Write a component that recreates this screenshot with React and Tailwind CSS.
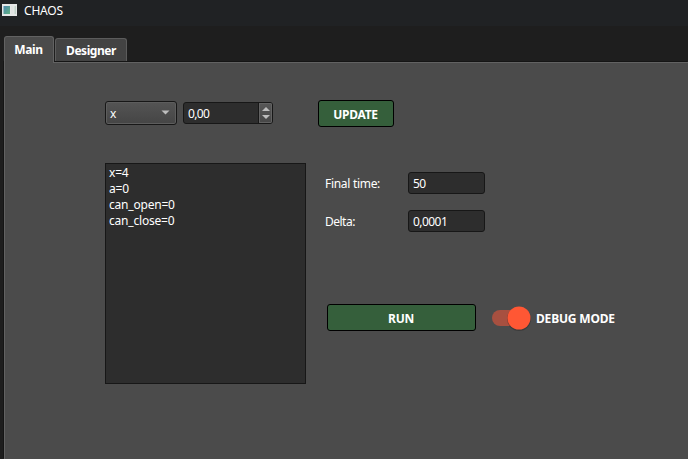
import React from "react";

const field =
  "flex h-[22px] w-[77px] items-center rounded-[3px] border border-[#171717] bg-[#2d2d2d] pl-1 pt-[2px] tracking-[-0.55px]";
const button =
  "flex h-[27px] items-center justify-center rounded-[3px] border border-black bg-[#355f3b] pr-px pt-[2px] font-bold";

function TitleBar() {
  return (
    <header className="flex h-[26px] items-start bg-[#202224] pl-[2px] pt-1">
      <svg width="15" height="12" viewBox="0 0 15 12" className="shrink-0">
        <defs>
          <linearGradient id="pane" x1="0" y1="0" x2="1" y2="1">
            <stop offset="0" stopColor="#4a86ad" />
            <stop offset="1" stopColor="#63b383" />
          </linearGradient>
        </defs>
        <rect width="15" height="12" fill="#e6e8e8" />
        <rect x="1.5" y="2" width="6.5" height="8" fill="url(#pane)" />
        <rect x="9" y="2" width="2.5" height="8" fill="#e0e4e2" />
        <rect x="12.5" y="2" width="1.5" height="8" fill="#c2d4ca" />
      </svg>
      <h1 className="ml-[7px] -mt-[1px] text-xs leading-[16px] tracking-[-0.2px]">CHAOS</h1>
    </header>
  );
}

function Tabs() {
  return (
    <nav className="flex h-[36px] items-end pl-1 font-bold">
      <div className="z-10 -mb-px flex h-[27px] w-[50px] items-center justify-center rounded-t-[3px] border border-b-0 border-[#626262] bg-[#4b4b4b] pr-px tracking-[-0.4px]">
        Main
      </div>
      <div className="mb-px ml-px flex h-[23px] w-[72px] items-center justify-center rounded-t-[3px] border border-b-0 border-[#5c5c5c] bg-[#434343] pt-px tracking-[-0.45px]">
        Designer
      </div>
    </nav>
  );
}

function Controls() {
  return (
    <div className="flex h-[27px] items-center">
      <div className="-mt-px flex h-6 w-[72px] items-center justify-between rounded-[3px] border border-[#171717] bg-gradient-to-b from-[#545454] to-[#454545] pl-1 pr-[6px] shadow-[inset_0_0_0_1px_#5d5d5d]">
        <span className="pt-[2px]">x</span>
        <svg width="9" height="5" viewBox="0 0 9 5" className="mb-px">
          <path d="M0.5 0.5h8L4.5 4.5z" fill="#bdbdbd" />
        </svg>
      </div>
      <div className="-mt-px ml-[6px] flex h-[22px] w-[90px] overflow-hidden rounded-[3px] border border-[#171717] bg-[#2d2d2d]">
        <span className="flex flex-1 items-center pl-1 pt-[2px] tracking-[-0.65px]">0,00</span>
        <div className="flex w-[14px] flex-col items-center justify-center gap-[4px] border-l border-[#171717] bg-gradient-to-b from-[#575757] to-[#474747] shadow-[inset_0_0_0_1px_#626262]">
          <svg width="8" height="4" viewBox="0 0 8 4">
            <path d="M0 4h8L4 0z" fill="#bdbdbd" />
          </svg>
          <svg width="8" height="4" viewBox="0 0 8 4">
            <path d="M0 0h8L4 4z" fill="#bdbdbd" />
          </svg>
        </div>
      </div>
      <button className={`${button} ml-[45px] w-[76px] tracking-[-0.25px]`}>UPDATE</button>
    </div>
  );
}

function Toggle() {
  return (
    <svg width="42" height="28" viewBox="0 0 42 28" className="ml-[14px]">
      <rect x="2" y="6" width="32" height="16" rx="8" fill="#a75040" />
      <circle cx="29" cy="15" r="12" fill="#000" opacity="0.2" />
      <circle cx="29" cy="14" r="11.5" fill="#ff5734" />
    </svg>
  );
}

export default function App() {
  return (
    <div
      className="flex h-[459px] w-[688px] flex-col overflow-hidden bg-[#1e1e1e] text-xs leading-4 text-white"
      style={{ fontFamily: '"Noto Sans", "Open Sans", sans-serif' }}
    >
      <TitleBar />
      <Tabs />
      <main className="ml-1 flex-1 border-l border-t border-[#626262] bg-[#4b4b4b] pl-[100px] pt-[37px] shadow-[-1px_-1px_0_#151515]">
        <Controls />
        <div className="mt-9 flex">
          <div className="h-[221px] w-[201px] border border-[#171717] bg-[#2d2d2d] pl-[3px] pt-px tracking-[-0.2px]">
            <div>x=4</div>
            <div>a=0</div>
            <div>can_open=0</div>
            <div>can_close=0</div>
          </div>
          <div className="ml-[19px] pt-[9px]">
            <div className="flex h-[22px] items-center">
              <span className="w-[83px] pt-px tracking-[-0.3px]">Final time:</span>
              <div className={field}>50</div>
            </div>
            <div className="mt-4 flex h-[22px] items-center">
              <span className="w-[83px] pt-px tracking-[-0.5px]">Delta:</span>
              <div className={field}>0,0001</div>
            </div>
            <div className="ml-[2px] mt-[72px] flex h-[27px] items-center">
              <button className={`${button} w-[149px] tracking-[-0.3px]`}>RUN</button>
              <Toggle />
              <span className="ml-[4px] whitespace-nowrap pt-[2px] font-bold tracking-[-0.18px]">DEBUG MODE</span>
            </div>
          </div>
        </div>
      </main>
    </div>
  );
}
